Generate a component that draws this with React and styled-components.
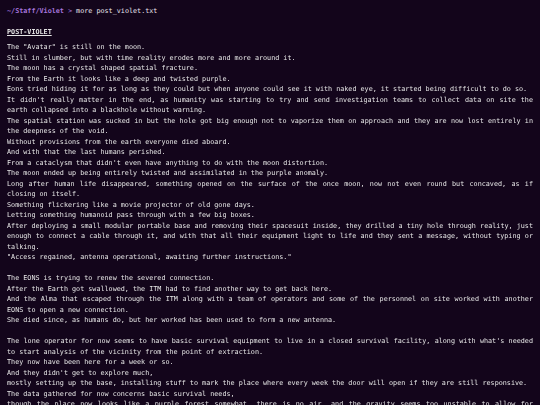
import React from 'react';
import styled, { createGlobalStyle } from 'styled-components';

const GlobalStyle = createGlobalStyle`
  html, body {
    margin: 0;
    padding: 0;
    background: #13051b;
    -webkit-font-smoothing: antialiased;
  }
`;

const Terminal = styled.div`
  box-sizing: border-box;
  width: 540px;
  min-height: 405px;
  padding: 6px 7px 0;
  background: #13051b;
  color: #e8e4ec;
  font-family: 'DejaVu Sans Mono', 'Liberation Mono', monospace;
  font-size: 6.75px;
  line-height: 10.5px;
  overflow: hidden;
`;

const Prompt = styled.div`
  white-space: pre;
`;

const Path = styled.span`
  color: #a675dc;
  font-weight: bold;
`;

const Arrow = styled.span`
  color: #a675dc;
`;

const Body = styled.div`
  filter: grayscale(1);
`;

const Title = styled.h1`
  margin: 10px 0 5px;
  font-size: inherit;
  line-height: inherit;
  font-weight: bold;
  text-decoration: underline;
  text-underline-offset: 1px;
`;

const Paragraph = styled.p`
  margin: 0 0 10.5px;
  text-align: justify;
`;

const paragraphs = [
  [
    'The "Avatar" is still on the moon.',
    'Still in slumber, but with time reality erodes more and more around it.',
    'The moon has a crystal shaped spatial fracture.',
    'From the Earth it looks like a deep and twisted purple.',
    'Eons tried hiding it for as long as they could but when anyone could see it with naked eye, it started being difficult to do so.',
    "It didn't really matter in the end, as humanity was starting to try and send investigation teams to collect data on site the earth collapsed into a blackhole without warning.",
    'The spatial station was sucked in but the hole got big enough not to vaporize them on approach and they are now lost entirely in the deepness of the void.',
    'Without provisions from the earth everyone died aboard.',
    'And with that the last humans perished.',
    "From a cataclysm that didn't even have anything to do with the moon distortion.",
    'The moon ended up being entirely twisted and assimilated in the purple anomaly.',
    'Long after human life disappeared, something opened on the surface of the once moon, now not even round but concaved, as if closing on itself.',
    'Something flickering like a movie projector of old gone days.',
    'Letting something humanoid pass through with a few big boxes.',
    'After deploying a small modular portable base and removing their spacesuit inside, they drilled a tiny hole through reality, just enough to connect a cable through it, and with that all their equipment light to life and they sent a message, without typing or talking.',
    '"Access regained, antenna operational, awaiting further instructions."',
  ],
  [
    'The EONS is trying to renew the severed connection.',
    'After the Earth got swallowed, the ITM had to find another way to get back here.',
    'And the Alma that escaped through the ITM along with a team of operators and some of the personnel on site worked with another EONS to open a new connection.',
    'She died since, as humans do, but her worked has been used to form a new antenna.',
  ],
  [
    "The lone operator for now seems to have basic survival equipment to live in a closed survival facility, along with what's needed to start analysis of the vicinity from the point of extraction.",
    'They now have been here for a week or so.',
    "And they didn't get to explore much,",
    'mostly setting up the base, installing stuff to mark the place where every week the door will open if they are still responsive.',
    'The data gathered for now concerns basic survival needs,',
    'though the place now looks like a purple forest somewhat, there is no air, and the gravity seems too unstable to allow for walking outside.',
  ],
];

const App = () => {
  return (
    <>
      <GlobalStyle />
      <Terminal>
        <Prompt>
          <Path>~/Staff/Violet</Path>
          <Arrow> &gt; </Arrow>
          more post_violet.txt
        </Prompt>
        <Body>
          <Title>POST-VIOLET</Title>
          {paragraphs.map((lines, i) => (
            <Paragraph key={i}>
              {lines.map((line, j) => (
                <React.Fragment key={j}>
                  {line}
                  {j < lines.length - 1 && <br />}
                </React.Fragment>
              ))}
            </Paragraph>
          ))}
        </Body>
      </Terminal>
    </>
  );
};

export default App;
